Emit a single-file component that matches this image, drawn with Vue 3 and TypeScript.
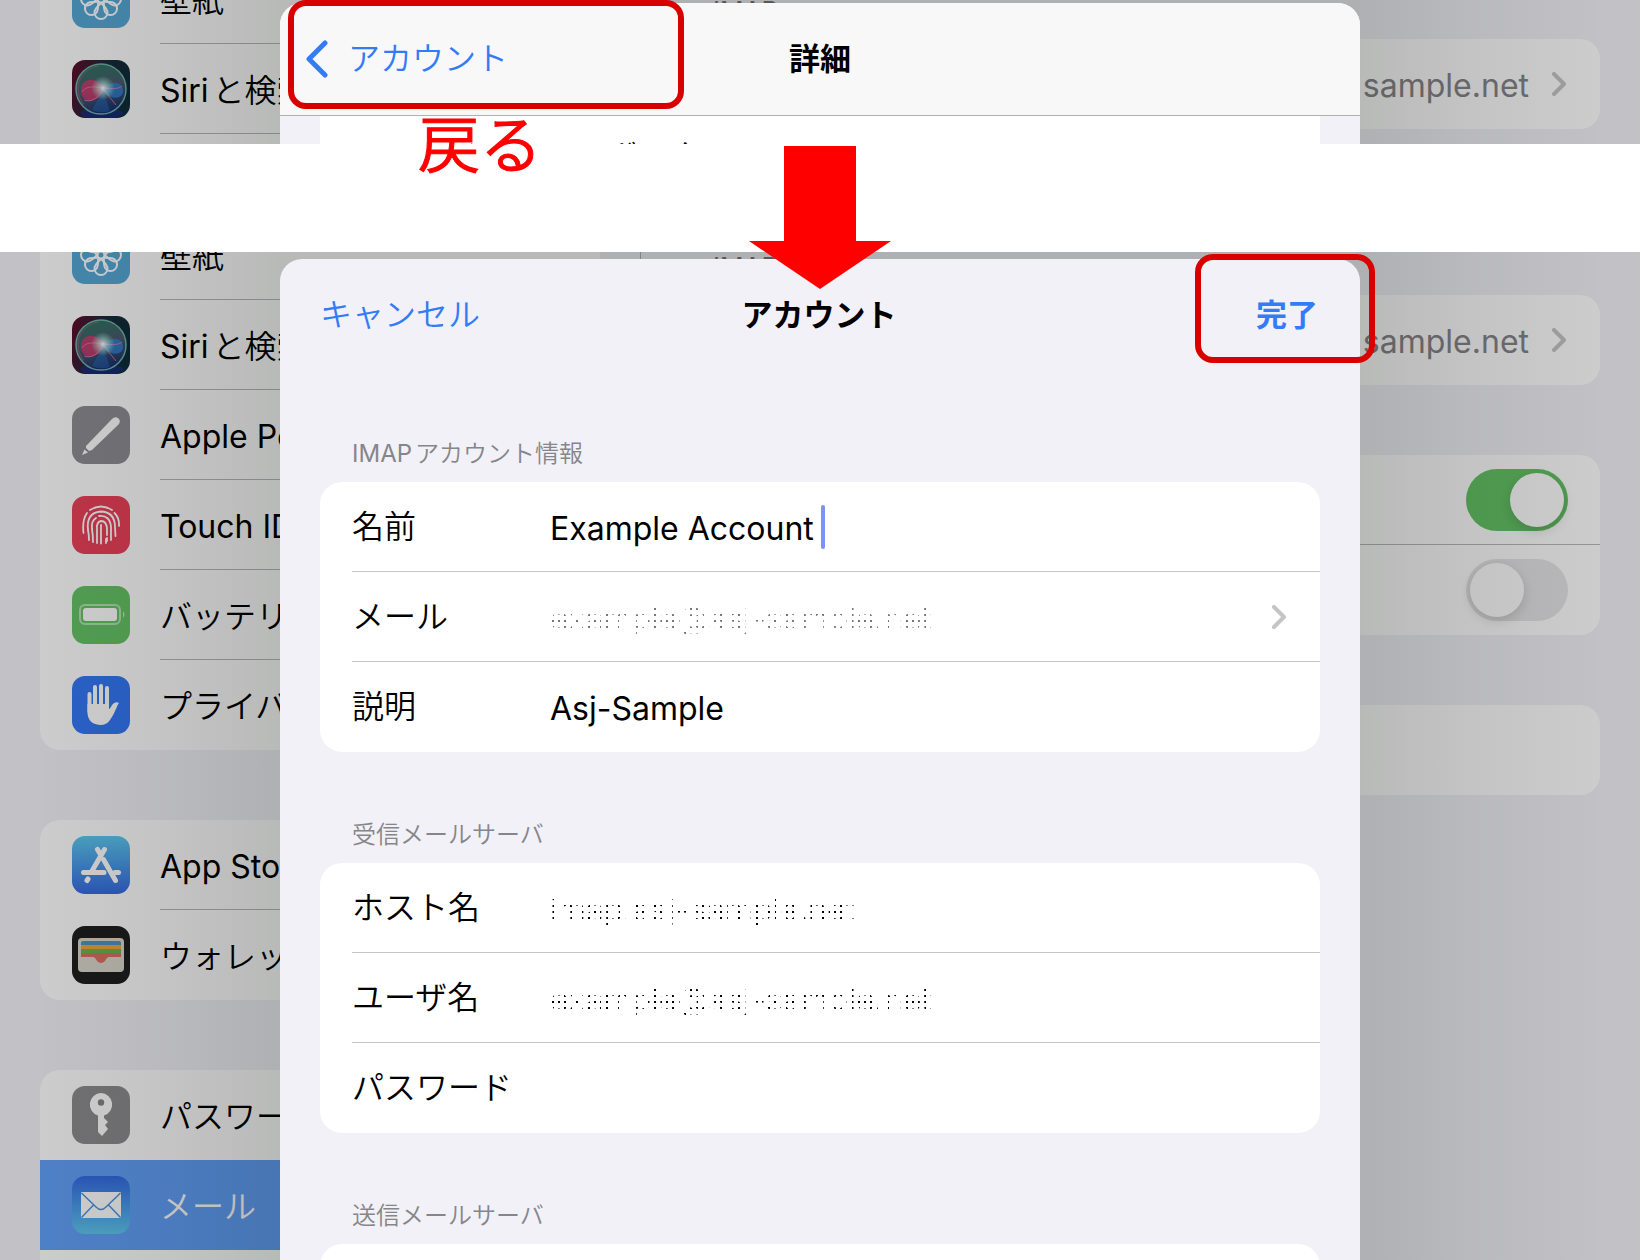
<script setup lang="ts">
interface MenuItem {
  icon: string
  label: string
  active?: boolean
}

interface Field {
  id: string
  label: string
  value: string
  kind?: 'focus' | 'masked' | 'masked-grey'
  link?: boolean
  type?: string
}

interface Section {
  title: string
  fields: Field[]
}

const menuGroups: MenuItem[][] = [
  [
    { icon: 'wallpaper', label: '壁紙' },
    { icon: 'siri', label: 'Siriと検索' },
    { icon: 'pencil', label: 'Apple Pencil' },
    { icon: 'touch', label: 'Touch ID' },
    { icon: 'battery', label: 'バッテリー' },
    { icon: 'privacy', label: 'プライバシー' },
  ],
  [
    { icon: 'store', label: 'App Store' },
    { icon: 'wallet', label: 'ウォレット' },
  ],
  [
    { icon: 'key', label: 'パスワード' },
    { icon: 'mail', label: 'メール', active: true },
    { icon: 'none', label: '' },
  ],
]

const screens = ['back', 'done']

const sections: Section[] = [
  {
    title: 'IMAPアカウント情報',
    fields: [
      { id: 'name', label: '名前', value: 'Example Account', kind: 'focus' },
      { id: 'mail', label: 'メール', value: 'example@asj-sample.net', kind: 'masked-grey', link: true },
      { id: 'note', label: '説明', value: 'Asj-Sample' },
    ],
  },
  {
    title: '受信メールサーバ',
    fields: [
      { id: 'host', label: 'ホスト名', value: 'imap.asj-sample.net', kind: 'masked' },
      { id: 'user', label: 'ユーザ名', value: 'example@asj-sample.net', kind: 'masked' },
      { id: 'pass', label: 'パスワード', value: '', type: 'password' },
    ],
  },
  {
    title: '送信メールサーバ',
    fields: [{ id: 'smtp', label: '', value: '' }],
  },
]

const petals = [0, 45, 90, 135, 180, 225, 270, 315]
</script>

<template>
  <main class="page">
    <section v-for="screen in screens" :key="screen" class="screen" :class="screen">
      <div class="settings">
        <nav class="sidebar" aria-label="設定">
          <ul v-for="(group, g) in menuGroups" :key="g" class="card menu">
            <li v-for="item in group" :key="item.icon">
              <a href="#" class="menu-row" :class="{ active: item.active }">
                <svg v-if="item.icon === 'wallpaper'" class="icon" viewBox="0 0 58 58">
                  <rect width="58" height="58" rx="13" fill="#55a8d6" />
                  <g fill="none" stroke="#fff" stroke-width="2">
                    <path
                      v-for="p in petals"
                      :key="p"
                      :transform="`rotate(${p} 29 29)`"
                      d="M29 33C25 37 22.500 39 22.500 42.500a6.500 6.500 0 0 0 13 0c0-3.500-2.500-5.500-6.500-9.500z"
                    />
                    <circle cx="29" cy="29" r="3.5" />
                  </g>
                </svg>
                <svg v-else-if="item.icon === 'siri'" class="icon" viewBox="0 0 58 58">
                  <defs>
                    <linearGradient :id="screen + 'siri-bg'" x1="0" y1="0.3" x2="1" y2="0.6">
                      <stop offset="0" stop-color="#5a0f2c" />
                      <stop offset="0.5" stop-color="#172a3a" />
                      <stop offset="1" stop-color="#0d2c38" />
                    </linearGradient>
                    <linearGradient :id="screen + 'siri-orb'" x1="0.3" y1="0" x2="0.6" y2="1">
                      <stop offset="0" stop-color="#2c7560" />
                      <stop offset="0.5" stop-color="#4a5b6e" />
                      <stop offset="1" stop-color="#142c6c" />
                    </linearGradient>
                    <radialGradient :id="screen + 'siri-glow'">
                      <stop offset="0" stop-color="#fff" />
                      <stop offset="0.3" stop-color="#d9f5f5" stop-opacity="0.7" />
                      <stop offset="1" stop-color="#9fd" stop-opacity="0" />
                    </radialGradient>
                  </defs>
                  <rect width="58" height="58" rx="13" :fill="`url(#${screen}siri-bg)`" />
                  <path d="M8 52q22-14 44 1-6 5-12 5H16q-5 0-8-6z" fill="#1b2b96" opacity="0.6" />
                  <circle cx="29" cy="29" r="25" :fill="`url(#${screen}siri-orb)`" stroke="#6fb2a8" stroke-width="1.5" />
                  <circle cx="29" cy="29" r="23" fill="none" stroke="#a7587c" stroke-width="0.8" stroke-dasharray="50 95" stroke-dashoffset="-55" />
                  <path d="M32 29C26 16 9 17 9 30s16 16 23-1z" fill="#d8376f" opacity="0.8" />
                  <path d="M31 31c6-11 19-10 20-1s-12 11-20 1z" fill="#2f86d8" opacity="0.75" />
                  <path d="M10 32c7-12 30 2 40-6M12 40c8 3 15-3 20-11M32 30l12 15" fill="none" stroke="#e57aa5" stroke-width="1" opacity="0.8" />
                  <path d="M31 30L20 50q9 4 18 1z" fill="#2877d3" opacity="0.4" />
                  <circle cx="31" cy="28" r="12" :fill="`url(#${screen}siri-glow)`" />
                </svg>
                <svg v-else-if="item.icon === 'pencil'" class="icon" viewBox="0 0 58 58">
                  <rect width="58" height="58" rx="13" fill="#8e8e93" />
                  <path d="M14 40L40 13q3-3 6-1t1 6L20 44l-3 1-3-3z" fill="#fff" />
                  <path d="M12.500 43.500l3.500 3-6 2.500z" fill="#fff" />
                </svg>
                <svg v-else-if="item.icon === 'touch'" class="icon" viewBox="0 0 58 58">
                  <rect width="58" height="58" rx="13" fill="#eb4159" />
                  <g fill="none" stroke="#fff" stroke-width="1.8" stroke-linecap="round">
                    <path d="M18 14q11-7 22 0M42.500 17q5 5 4.500 13M15 17q-5 7-3.500 20" />
                    <path d="M17 44q0-5-1-10-2-17 12.500-18.500Q43 16 43 31l.5 9" />
                    <path d="M21 46q0-7-1-13-1-8 4-11M27 20q11-1 12 11v13" />
                    <path d="M25 47V34q-1-8 4-9 6 0 6 9v5M35 42v3" />
                    <path d="M29 29v18.500M34 43v4" />
                  </g>
                </svg>
                <svg v-else-if="item.icon === 'battery'" class="icon" viewBox="0 0 58 58">
                  <rect width="58" height="58" rx="13" fill="#65c466" />
                  <rect x="8" y="19" width="40" height="19" rx="5" fill="none" stroke="#fff" stroke-opacity="0.5" stroke-width="2" />
                  <rect x="11" y="22" width="34" height="13" rx="3" fill="#fff" />
                  <path d="M51 25q3 3.500 0 7z" fill="#fff" fill-opacity="0.6" />
                </svg>
                <svg v-else-if="item.icon === 'privacy'" class="icon" viewBox="0 0 58 58">
                  <rect width="58" height="58" rx="13" fill="#3478f6" />
                  <g fill="none" stroke="#fff" stroke-width="4" stroke-linecap="round">
                    <path d="M17.500 18v18M23 11v22M29 10v22M35 12v22" />
                  </g>
                  <path d="M15.500 28h21.500v5q1 0 3-4 3-4 7-2-1 1-3 6-3 7-6 11-3 5-10 5-12.500-1-12.500-13z" fill="#fff" />
                </svg>
                <svg v-else-if="item.icon === 'store'" class="icon" viewBox="0 0 58 58">
                  <defs>
                    <linearGradient :id="screen + 'store-bg'" x1="0" y1="0" x2="0" y2="1">
                      <stop offset="0" stop-color="#5dc8ef" />
                      <stop offset="1" stop-color="#3769e3" />
                    </linearGradient>
                  </defs>
                  <rect width="58" height="58" rx="13" :fill="`url(#${screen}store-bg)`" />
                  <g fill="none" stroke="#fff" stroke-width="5" stroke-linecap="round">
                    <path d="M32.500 13.500L20 35M25.500 13.500l3 5M11.500 36.500H32M43 36.500h3.500M16 43l-1 1.500" />
                    <path d="M31.500 23.500L43.500 44.500" />
                  </g>
                </svg>
                <svg v-else-if="item.icon === 'wallet'" class="icon" viewBox="0 0 58 58">
                  <rect width="58" height="58" rx="13" fill="#1e1e1f" />
                  <rect x="6" y="12" width="46" height="34" rx="4" fill="#d9d7cb" />
                  <path d="M9 19v-2q0-2 2-2h36q2 0 2 2v2z" fill="#4e94c4" />
                  <path d="M9 23v-4h40v4z" fill="#f0a83a" />
                  <path d="M9 27v-4h40v4z" fill="#69b650" />
                  <path d="M9 31v-4h40v4H37q-2 0-4 4-4 4-8 0-2-4-4-4z" fill="#e06e5f" />
                </svg>
                <svg v-else-if="item.icon === 'key'" class="icon" viewBox="0 0 58 58">
                  <rect width="58" height="58" rx="13" fill="#8c8c8e" />
                  <path d="M29 7a11.500 11.500 0 0 1 3 22.500V32l4 4-3 3 3 4-6 7-4-4V29.500A11.500 11.500 0 0 1 29 7z" fill="#fff" />
                  <circle cx="29" cy="16.500" r="3.200" fill="#858587" />
                </svg>
                <svg v-else-if="item.icon === 'mail'" class="icon" viewBox="0 0 58 58">
                  <defs>
                    <linearGradient :id="screen + 'mail-bg'" x1="0" y1="0" x2="0" y2="1">
                      <stop offset="0" stop-color="#346ae4" />
                      <stop offset="1" stop-color="#5fc8ef" />
                    </linearGradient>
                  </defs>
                  <rect width="58" height="58" rx="13" :fill="`url(#${screen}mail-bg)`" />
                  <rect x="9" y="16" width="40" height="26" rx="1" fill="#fff" />
                  <path d="M9.500 17L24 31q5 5 10 0l14.500-14M9.500 41.500L21.500 29M48.500 41.500L36.500 29" fill="none" stroke="#4a94e8" stroke-width="1.500" />
                </svg>
                <span class="menu-label">{{ item.label }}</span>
              </a>
            </li>
          </ul>
        </nav>

        <div class="detail">
          <h2 class="detail-title">IMAP</h2>
          <a href="#" class="card detail-row">
            <span class="detail-value">sample.net</span>
            <svg class="chevron" viewBox="0 0 14 24"><path d="M2 2l10 10L2 22" /></svg>
          </a>
          <div class="card switches">
            <div class="detail-row"><input type="checkbox" class="switch" aria-label="メール" checked /></div>
            <div class="detail-row"><input type="checkbox" class="switch" aria-label="メモ" /></div>
          </div>
          <div class="card detail-row"></div>
        </div>
      </div>
      <div class="dim"></div>

      <article v-if="screen === 'back'" class="sheet">
        <header class="bar bar-lined">
          <button type="button" class="bar-button back-button">
            <svg viewBox="0 0 22 38"><path d="M19 3L3 19l16 16" /></svg>
            <span>アカウント</span>
          </button>
          <h1>詳細</h1>
        </header>
        <div class="sheet-body"><div class="mailbox">アーカイブメールボックス</div></div>
      </article>

      <form v-else class="sheet">
        <header class="bar">
          <button type="button" class="bar-button">キャンセル</button>
          <h1>アカウント</h1>
          <button type="button" class="bar-button strong">完了</button>
        </header>
        <div class="sheet-body">
          <section v-for="section in sections" :key="section.title">
            <h2 class="group-title">{{ section.title }}</h2>
            <div class="group">
              <div v-for="field in section.fields" :key="field.id" class="field">
                <label :for="field.id">{{ field.label }}</label>
                <input :id="field.id" :type="field.type ?? 'text'" :value="field.value" :class="field.kind" />
                <span v-if="field.kind === 'focus'" class="caret"></span>
                <svg v-if="field.link" class="chevron" viewBox="0 0 14 24"><path d="M2 2l10 10L2 22" /></svg>
              </div>
            </div>
          </section>
        </div>
      </form>
    </section>

    <div class="notes">
      <div class="ring ring-back"></div>
      <p class="note-text">戻る</p>
      <svg class="arrow" viewBox="0 0 142 143">
        <path d="M35 0h72v95h35L71 143 0 95h35z" fill="#f00" />
      </svg>
      <div class="ring ring-done"></div>
    </div>
  </main>
</template>

<style>
body {
  margin: 0;
  background: #fff;
}
</style>

<style scoped>
.page {
  position: relative;
  display: flex;
  flex-direction: column;
  gap: 108px;
  height: 100vh;
  overflow: hidden;
  font-family: Inter, "Noto Sans CJK JP DemiLight", "Noto Sans CJK JP", sans-serif;
  font-size: 32px;
  line-height: 40px;
  text-autospace: normal;
  color: #000;
}

h1,
h2,
p,
ul {
  margin: 0;
  padding: 0;
}

.screen {
  position: relative;
  overflow: hidden;
  background: #f2f2f7;
  --scroll: -46px;
  --sheet-top: 3px;
}

.back {
  flex: 0 0 144px;
}

.done {
  flex: 1 1 0;
  --scroll: -42px;
  --sheet-top: 7px;
}

.settings {
  display: flex;
  margin-top: var(--scroll);
}

.sidebar {
  box-sizing: border-box;
  flex: 0 0 641px;
  padding: 0 40px;
  border-right: 1px solid #b4b4b8;
  display: flex;
  flex-direction: column;
  gap: 70px;
}

.card {
  background: #fff;
  border-radius: 20px;
}

.menu {
  list-style: none;
  overflow: hidden;
}

.menu:first-child {
  border-radius: 0 0 20px 20px;
}

.menu-row {
  position: relative;
  display: flex;
  align-items: center;
  gap: 30px;
  height: 90px;
  padding-left: 32px;
  color: inherit;
  text-decoration: none;
  white-space: nowrap;
}

.menu-label,
.detail-value {
  padding-top: 4px;
}

li + li .menu-row::before {
  content: "";
  position: absolute;
  left: 120px;
  right: 0;
  top: -1px;
  height: 1px;
  background: #b9b9bb;
}

.menu-row.active {
  background: #62a0f8;
  color: #fff;
}

li + li .menu-row.active::before,
li:has(.active) + li .menu-row::before {
  display: none;
}

.icon {
  flex: none;
  width: 58px;
  height: 58px;
}

.detail {
  flex: 1;
  display: flex;
  flex-direction: column;
  gap: 70px;
  padding: 41px 40px 0;
}

.detail-title {
  height: 14px;
  margin-bottom: -40px;
  padding-left: 32px;
  font-size: 26px;
  line-height: 32px;
  font-weight: 400;
  color: #77777b;
}

.detail-row {
  box-sizing: border-box;
  height: 90px;
  padding: 0 32px;
  display: flex;
  align-items: center;
  justify-content: flex-end;
  gap: 23px;
  color: #86868a;
  text-decoration: none;
}

.card.detail-row {
  padding-right: 34px;
}

.switches .detail-row + .detail-row {
  box-shadow: 0 -1px #b9b9bb;
}

.switch {
  appearance: none;
  box-sizing: border-box;
  width: 102px;
  height: 62px;
  margin: 0;
  padding: 4px;
  border-radius: 31px;
  background: #e6e6e8;
  display: flex;
}

.switch::before {
  content: "";
  width: 54px;
  height: 54px;
  border-radius: 50%;
  background: #fff;
  box-shadow: 0 4px 12px rgba(0, 0, 0, 0.14);
}

.switch:checked {
  background: #65c466;
  justify-content: flex-end;
}

.dim {
  position: absolute;
  inset: 0;
  pointer-events: none;
  background: linear-gradient(
    90deg,
    rgba(0, 0, 0, 0.2),
    rgba(0, 0, 0, 0.2) 40px,
    rgba(0, 2, 0, 0.23) 160px,
    rgba(0, 6, 0, 0.28) 280px,
    rgba(0, 6, 0, 0.28) calc(100% - 280px),
    rgba(0, 2, 0, 0.23) calc(100% - 160px),
    rgba(0, 0, 0, 0.2) calc(100% - 40px),
    rgba(0, 0, 0, 0.2)
  );
}

.chevron {
  flex: none;
  width: 14px;
  height: 24px;
  fill: none;
  stroke: #c5c5c7;
  stroke-width: 4;
  stroke-linecap: round;
  stroke-linejoin: round;
}

.sheet {
  position: absolute;
  top: var(--sheet-top);
  bottom: 0;
  left: 0;
  right: 0;
  width: min(1080px, 100%);
  margin: 0 auto;
  border-radius: 22px 22px 0 0;
  background: #f2f1f7;
  overflow: hidden;
}

.bar {
  height: 112px;
  padding: 0 42px 0 40px;
  display: grid;
  grid-template-columns: 1fr auto 1fr;
  align-items: center;
}

.bar-lined {
  padding: 0 26px;
  background: #f8f8f8;
  border-bottom: 1px solid #b0b0b3;
}

.bar h1 {
  grid-column: 2;
  font-family: Inter, "Noto Sans CJK JP", sans-serif;
  font-size: 31px;
  line-height: 40px;
  font-weight: 700;
}

.bar-button {
  justify-self: start;
  display: flex;
  align-items: center;
  gap: 20px;
  padding: 0;
  border: 0;
  background: none;
  font: inherit;
  color: #347bf7;
}

.bar-button.strong {
  justify-self: end;
  font-family: Inter, "Noto Sans CJK JP", sans-serif;
  font-size: 31px;
  font-weight: 700;
}

.back-button svg {
  width: 22px;
  height: 38px;
  fill: none;
  stroke: currentColor;
  stroke-width: 5;
  stroke-linecap: round;
  stroke-linejoin: round;
}

.sheet-body {
  padding: 0 40px;
}

.mailbox {
  display: flex;
  align-items: center;
  height: 82px;
  padding-left: 32px;
  background: #fff;
}

.group-title {
  box-sizing: border-box;
  height: 111px;
  padding: 66px 32px 0;
  font-size: 24px;
  line-height: 34px;
  font-weight: 400;
  color: #86868a;
}

.group {
  padding-left: 32px;
  border-radius: 22px;
  background: #fff;
}

.field {
  display: flex;
  align-items: center;
  height: 90px;
  padding-right: 34px;
}

.field + .field {
  box-shadow: 0 -1px #c6c6c8;
}

.field label {
  flex: 0 0 198px;
}

.field input {
  flex: 1;
  min-width: 0;
  padding: 4px 0 0;
  border: 0;
  outline: 0;
  background: none;
  font: inherit;
  color: inherit;
}

.field input.focus {
  flex: none;
  field-sizing: content;
}

.field input.masked,
.field input.masked-grey {
  mask-image: linear-gradient(90deg, #000 2px, transparent 2px), linear-gradient(#000 2px, transparent 2px);
  mask-size: 6px 6px;
  mask-position: 2px 1px;
  mask-composite: intersect;
}

.field input.masked-grey {
  color: #77777a;
}

.caret {
  width: 4px;
  height: 44px;
  margin-left: 7px;
  border-radius: 2px;
  background: #7b93f4;
}

.notes {
  position: absolute;
  top: 0;
  left: 0;
  right: 0;
  width: min(1080px, 100%);
  margin: 0 auto;
  pointer-events: none;
}

.ring {
  position: absolute;
  box-sizing: border-box;
  height: 109px;
  border: 6px solid #d90000;
  border-radius: 18px;
}

.ring-back {
  left: 8px;
  top: 0;
  width: 396px;
}

.ring-done {
  right: -15px;
  top: 254px;
  width: 180px;
}

.note-text {
  position: absolute;
  left: 138px;
  top: 115px;
  font-size: 62px;
  line-height: 62px;
  color: #f00;
  -webkit-text-stroke: 1px #f00;
}

.arrow {
  position: absolute;
  left: 0;
  right: 0;
  top: 146px;
  width: 142px;
  height: 143px;
  margin: 0 auto;
}
</style>
